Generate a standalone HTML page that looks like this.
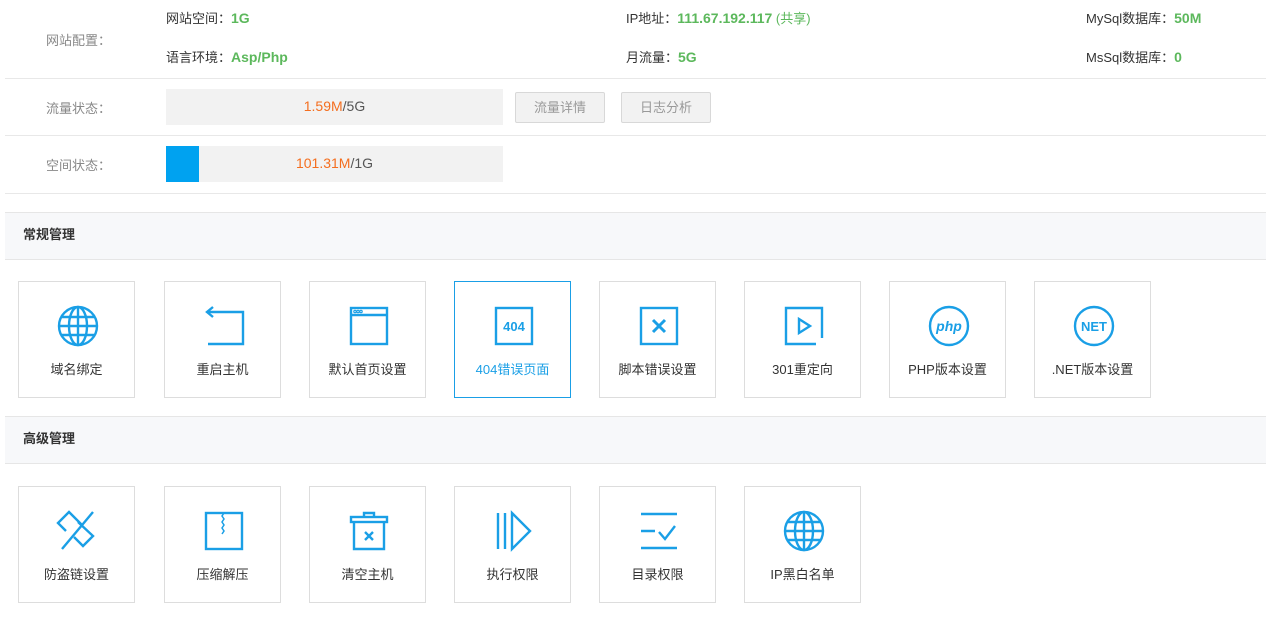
<!DOCTYPE html>
<html><head><meta charset="utf-8"><style>
*{margin:0;padding:0;box-sizing:border-box}
body{width:1266px;height:628px;background:#fff;font-family:"Liberation Sans","Noto Sans CJK SC",sans-serif;font-size:13px;color:#333;position:relative;overflow:hidden}
.a{position:absolute;white-space:nowrap}
.lbl{color:#888}
.g{color:#5cb85c;font-weight:bold;font-size:14px}
.line{position:absolute;left:5px;right:0;height:1px;background:#e8e8e8}
.bar{position:absolute;left:166px;width:337px;height:36px;background:#f2f2f2;text-align:center;line-height:36px;font-size:14px;color:#555}
.bar .o{color:#f46e1f}
.btn{position:absolute;top:92px;height:31px;border:1px solid #d8d8d8;border-radius:2px;background:#f2f2f2;color:#999;line-height:29px;text-align:center;font-size:13px}
.sec{position:absolute;left:5px;right:0;height:48px;background:#f7f8fa;border-top:1px solid #e6e6e6;border-bottom:1px solid #e6e6e6;font-weight:bold;font-size:13px;line-height:44px;padding-left:18px;color:#333}
.t{position:absolute;width:117px;height:117px;border:1px solid #ddd;background:#fff}
.t svg{position:absolute;left:37px;top:22px;width:44px;height:44px}
.t span{position:absolute;left:0;right:0;top:77px;text-align:center;font-size:13px;color:#333}
.t.on{border-color:#1a9fe6}.t.on span{color:#1a9fe6}
svg *{stroke:#1a9fe6;fill:none;stroke-width:2.4}
</style></head><body>
<div class="a lbl" style="left:46px;top:30px">网站配置：</div>
<div class="a" style="left:166px;top:8px">网站空间：<span class="g">1G</span></div>
<div class="a" style="left:166px;top:47px">语言环境：<span class="g">Asp/Php</span></div>
<div class="a" style="left:626px;top:8px">IP地址：<span class="g">111.67.192.117</span> <span style="color:#5cb85c">(共享)</span></div>
<div class="a" style="left:626px;top:47px">月流量：<span class="g">5G</span></div>
<div class="a" style="left:1086px;top:8px">MySql数据库：<span class="g">50M</span></div>
<div class="a" style="left:1086px;top:47px">MsSql数据库：<span class="g">0</span></div>
<div class="line" style="top:78px"></div>
<div class="a lbl" style="left:46px;top:98px">流量状态：</div>
<div class="bar" style="top:89px;line-height:34px"><span class="o">1.59M</span>/5G</div>
<div class="btn" style="left:515px;width:90px">流量详情</div>
<div class="btn" style="left:621px;width:90px">日志分析</div>
<div class="line" style="top:135px"></div>
<div class="a lbl" style="left:46px;top:155px">空间状态：</div>
<div class="bar" style="top:146px;line-height:34px"><div style="position:absolute;left:0;top:0;width:33px;height:36px;background:#00a2f0"></div><span class="o">101.31M</span>/1G</div>
<div class="line" style="top:193px"></div>
<div class="sec" style="top:212px">常规管理</div>

<div class="t" style="left:18px;top:281px"><svg viewBox="0 0 44 44"><circle cx="22" cy="22" r="19"/><ellipse cx="22" cy="22" rx="9" ry="19"/><line x1="22" y1="3" x2="22" y2="41"/><line x1="3" y1="22" x2="41" y2="22"/><line x1="6" y1="13" x2="38" y2="13"/><line x1="6" y1="31" x2="38" y2="31"/></svg><span>域名绑定</span></div>
<div class="t" style="left:164px;top:281px"><svg viewBox="0 0 44 44"><path d="M6 8H41V40H6"/><path d="M11 3L5 8L11 13"/></svg><span>重启主机</span></div>
<div class="t" style="left:309px;top:281px"><svg viewBox="0 0 44 44"><rect x="4" y="4" width="36" height="36"/><line x1="4" y1="11" x2="40" y2="11"/><circle cx="8" cy="7.5" r=".6"/><circle cx="11" cy="7.5" r=".6"/><circle cx="14" cy="7.5" r=".6"/></svg><span>默认首页设置</span></div>
<div class="t on" style="left:454px;top:281px"><svg viewBox="0 0 44 44"><rect x="4" y="4" width="36" height="36"/><text x="22" y="27" text-anchor="middle" style="fill:#1a9fe6;stroke:none;font:bold 13px 'Liberation Sans',sans-serif">404</text></svg><span>404错误页面</span></div>
<div class="t" style="left:599px;top:281px"><svg viewBox="0 0 44 44"><rect x="4" y="4" width="36" height="36"/><path d="M16 16L28 28M28 16L16 28" style="stroke-width:3"/></svg><span>脚本错误设置</span></div>
<div class="t" style="left:744px;top:281px"><svg viewBox="0 0 44 44"><path d="M40 34V4H4V40H34"/><path d="M17 15L28 22L17 29Z"/></svg><span>301重定向</span></div>
<div class="t" style="left:889px;top:281px"><svg viewBox="0 0 44 44"><circle cx="22" cy="22" r="19"/><text x="22" y="27" text-anchor="middle" style="fill:#1a9fe6;stroke:none;font:italic bold 14px 'Liberation Sans',sans-serif">php</text></svg><span>PHP版本设置</span></div>
<div class="t" style="left:1034px;top:281px"><svg viewBox="0 0 44 44"><circle cx="22" cy="22" r="19"/><text x="22" y="27" text-anchor="middle" style="fill:#1a9fe6;stroke:none;font:bold 13px 'Liberation Sans',sans-serif">NET</text></svg><span>.NET版本设置</span></div>

<div class="sec" style="top:416px">高级管理</div>

<div class="t" style="left:18px;top:486px"><svg viewBox="0 0 44 44"><path d="M26 16L13 3L2 14L10 22"/><path d="M22 13L37 27L27 37L18 28"/><path d="M37 3L6 40"/></svg><span>防盗链设置</span></div>
<div class="t" style="left:164px;top:486px"><svg viewBox="0 0 44 44"><rect x="4" y="4" width="36" height="36"/><path d="M22 4L20 7L22 10L20 13L22 16L20 19L22 22L20 25" style="stroke-width:1.5"/></svg><span>压缩解压</span></div>
<div class="t" style="left:309px;top:486px"><svg viewBox="0 0 44 44"><rect x="4" y="8" width="36" height="5"/><path d="M17 8V4H27V8M7 13V40H37V13"/><path d="M18 23L26 31M26 23L18 31"/></svg><span>清空主机</span></div>
<div class="t" style="left:454px;top:486px"><svg viewBox="0 0 44 44"><path d="M6 4V40M13 4V40M20 4L38 22L20 40Z"/></svg><span>执行权限</span></div>
<div class="t" style="left:599px;top:486px"><svg viewBox="0 0 44 44"><path d="M4 5H40M4 22H18M4 39H40"/><path d="M22 23L28 30L38 17"/></svg><span>目录权限</span></div>
<div class="t" style="left:744px;top:486px"><svg viewBox="0 0 44 44"><circle cx="22" cy="22" r="19"/><ellipse cx="22" cy="22" rx="9" ry="19"/><line x1="22" y1="3" x2="22" y2="41"/><line x1="3" y1="22" x2="41" y2="22"/><line x1="6" y1="13" x2="38" y2="13"/><line x1="6" y1="31" x2="38" y2="31"/></svg><span>IP黑白名单</span></div>
</body></html>
